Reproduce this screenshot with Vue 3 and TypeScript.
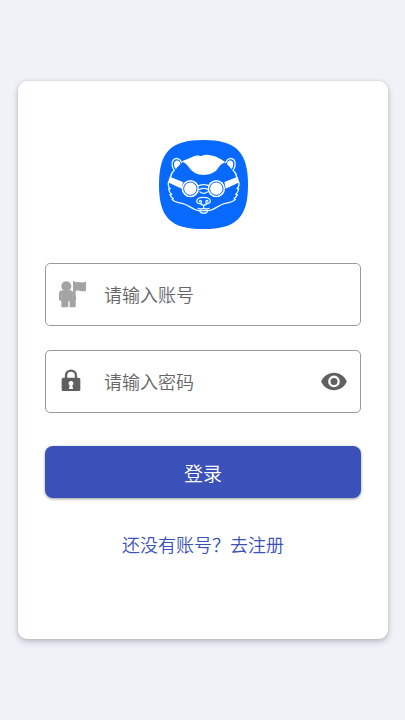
<script setup lang="ts">
import { ref } from 'vue'

const account = ref('')
const password = ref('')
const showPassword = ref(false)
</script>

<template>
  <main class="page">
    <form class="card" @submit.prevent>
      <svg class="logo" viewBox="26 24 267 267" aria-hidden="true">
        <path fill="#0769fe" d="M26 158C26 60 61 24 159 24S293 60 293 158S258 291 159 291S26 256 26 158Z" />
        <path fill="#fff" d="M94 88C105 84 115 80 124 76C134 70 143 69 153 72C162 68 174 67 185 71C194 71 199 74 204 78C212 81 219 86 225 91C213 95 207 103 201 112C191 124 176 129 160 129C142 129 127 122 118 109C111 99 104 92 94 88Z" />
        <g fill="#fff">
          <path d="M72 91C77 82 88 84 90 95C88 102 81 101 77 112C72 107 70 99 72 91Z" />
          <path d="M248 91C243 82 232 84 230 95C232 102 239 101 243 112C248 107 250 99 248 91Z" />
          <path d="M58 134L98 150L94 170L53 151Z" />
          <path d="M262 134L222 150L226 170L267 151Z" />
        </g>
        <g fill="none" stroke="#e9fbff" stroke-width="4" stroke-linecap="round" stroke-linejoin="round">
          <path d="M94 92C89 79 76 76 69 84C62 93 66 107 72 115C64 121 62 127 61 135" />
          <path d="M226 92C231 79 244 76 251 84C258 93 254 107 248 115C256 121 258 127 259 135" />
          <path d="M54 151C53 160 55 166 60 170L55 171C56 179 59 183 64 187L59 188C61 194 65 197 69 200L65 202C71 209 82 212 95 214C114 217 124 233 144 236H176C196 233 206 217 225 214C238 212 249 209 255 202L251 200C255 197 259 194 261 188L256 187C261 183 264 179 265 171L260 170C265 166 267 160 266 151" />
          <path d="M145 161C155 157 166 157 175 161M146 173C155 168 165 168 174 173M149 180C156 185 164 185 171 180" />
          <path d="M139 208C139 192 180 192 180 208C180 215 170 217 167 211C165 206 171 204 173 208M139 208C139 215 150 217 153 211C155 206 149 204 147 208M151 215C154 221 166 221 169 215M160 220V230M144 229C150 233 155 231 160 229C165 231 170 233 176 229" />
          <path d="M148 236C149 246 171 246 172 236" />
        </g>
        <g fill="#fff">
          <circle cx="120" cy="170" r="26" />
          <circle cx="198" cy="170" r="26" />
        </g>
        <g fill="none" stroke="#0769fe" stroke-width="3">
          <circle cx="120" cy="170" r="20" />
          <circle cx="198" cy="170" r="20" />
        </g>
      </svg>

      <div class="fields">
        <label class="field">
          <svg class="icon" viewBox="0 0 84 84" aria-hidden="true">
            <g fill="#a3a3a3">
              <circle cx="25" cy="16" r="15" />
              <path d="M13 28H39L45 32V1H52V5C62 0 70 8 84 2V30C71 34 62 25 53 30V46C55 50 55 54 53 58V79H35V61H31V79H10V61L3 56V39C3 32 7 28 13 28Z" />
            </g>
            <path d="M11 39V58M43 37V50" fill="none" stroke="#ccc" stroke-width="1" />
          </svg>
          <input v-model="account" type="text" placeholder="请输入账号" aria-label="账号" autocomplete="username" />
        </label>

        <div class="field">
          <label for="password">
            <svg class="icon" viewBox="0 0 84 84" aria-hidden="true">
              <path fill="none" stroke="#606060" stroke-width="7" d="M24 35V23C24 3 54 3 54 23V35" />
              <path fill="#606060" fill-rule="evenodd" d="M16 29H62Q67 29 67 34V65Q67 69 63 69H15Q11 69 11 65V34Q11 29 16 29ZM39 39A7 7 0 0 0 35 52L33 63H45L43 52A7 7 0 0 0 39 39Z" />
            </svg>
          </label>
          <input id="password" v-model="password" :type="showPassword ? 'text' : 'password'" placeholder="请输入密码" aria-label="密码" autocomplete="current-password" />
          <button class="eye" type="button" aria-label="显示密码" @click="showPassword = !showPassword">
            <svg class="icon" viewBox="0 0 24 24" aria-hidden="true">
              <path fill="#606060" d="M12 4C7 4 2.730 7.110 1 11.500c1.730 4.390 6 7.500 11 7.500s9.270-3.110 11-7.500c-1.730-4.390-6-7.500-11-7.500zM12 16.500a5 5 0 1 1 0-10 5 5 0 0 1 0 10zm0-8a3 3 0 1 0 0 6 3 3 0 0 0 0-6z" />
            </svg>
          </button>
        </div>
      </div>

      <button class="submit" type="submit">登录</button>
      <a class="register" href="#register">还没有账号？去注册</a>
    </form>
  </main>
</template>

<style>
body {
  background: #f0f2f8;
}
</style>

<style scoped>
.page,
.page * {
  box-sizing: border-box;
}

.page {
  display: flex;
  align-items: center;
  min-height: 100vh;
  padding: 18px;
  padding-right: 17px;
  font-family: "Noto Sans CJK SC", sans-serif;
  font-size: 18px;
  font-weight: 350;
}

.card {
  display: flex;
  flex: 1;
  flex-direction: column;
  align-items: center;
  min-width: 0;
  padding: 59px 27px 81px;
  border-radius: 9px;
  background: #fff;
  box-shadow: 0 3px 6px rgba(50, 50, 65, 0.26), 0 0 3px rgba(50, 50, 65, 0.14);
}

.logo {
  width: 89px;
  height: 89px;
}

.fields {
  display: flex;
  flex-direction: column;
  gap: 24px;
  width: 100%;
  margin-top: 34px;
}

.field {
  display: flex;
  align-items: center;
  height: 63px;
  padding: 0 12px;
  border: 1px solid #999;
  border-radius: 5px;
}

.icon {
  display: block;
  flex: none;
  width: 28px;
  height: 28px;
}

input {
  flex: 1;
  min-width: 0;
  height: 100%;
  margin-left: 18px;
  padding: 0 0 2px;
  border: 0;
  outline: 0;
  background: transparent;
  color: #444;
  font: inherit;
}

input::placeholder {
  color: #666;
  opacity: 1;
}

.eye {
  flex: none;
  padding: 0;
  border: 0;
  background: none;
  cursor: pointer;
}

.submit {
  width: 100%;
  height: 52px;
  margin-top: 33px;
  padding: 0;
  border: 0;
  border-radius: 8px;
  background: #3b51ba;
  box-shadow: 0 1px 3px rgba(0, 0, 0, 0.4);
  color: #fff;
  font: inherit;
  font-size: 19px;
  cursor: pointer;
}

.register {
  margin-top: 32px;
  color: #3b51ba;
  line-height: 28px;
  text-decoration: none;
}
</style>
